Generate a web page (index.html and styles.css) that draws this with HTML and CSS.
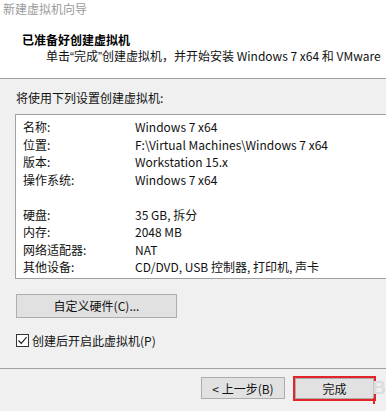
FILE: index.html
```html
<!DOCTYPE html>
<html lang="zh-CN">
<head>
    <meta charset="UTF-8">
    <meta name="viewport" content="width=device-width, initial-scale=1.0">
    <title>新建虚拟机向导</title>
    <link rel="stylesheet" href="styles.css">
</head>
<body>
    <div class="wizard">
        <header class="top">
            <div class="caption">新建虚拟机向导</div>
            <h1>已准备好创建虚拟机</h1>
            <p class="subtitle">单击<span class="q">“</span>完成<span class="q">”</span>创建虚拟机，并开始安装 Windows 7 x64 和 VMware</p>
        </header>

        <main class="content">
            <p class="intro">将使用下列设置创建虚拟机:</p>

            <div class="summary">
                <div class="row"><span class="key">名称:</span><span>Windows 7 x64</span></div>
                <div class="row"><span class="key">位置:</span><span>F:\Virtual Machines\Windows 7 x64</span></div>
                <div class="row"><span class="key">版本:</span><span>Workstation 15.x</span></div>
                <div class="row"><span class="key">操作系统:</span><span>Windows 7 x64</span></div>
                <div class="row"></div>
                <div class="row"><span class="key">硬盘:</span><span>35 GB, 拆分</span></div>
                <div class="row"><span class="key">内存:</span><span>2048 MB</span></div>
                <div class="row"><span class="key">网络适配器:</span><span>NAT</span></div>
                <div class="row"><span class="key">其他设备:</span><span>CD/DVD, USB 控制器, 打印机, 声卡</span></div>
            </div>

            <button class="btn btn-wide">自定义硬件(C)...</button>

            <label class="check">
                <span class="box">
                    <svg width="11" height="11" viewBox="0 0 11 11"><path d="M1.5 5.5 L4.3 8.3 L9.6 2.2" fill="none" stroke="#222" stroke-width="1.2"/></svg>
                </span>
                创建后开启此虚拟机(P)
            </label>
        </main>

        <footer class="actions">
            <button class="btn btn-nav">&lt; 上一步(B)</button>
            <button class="btn btn-nav btn-finish">完成</button>
            <span class="mark">B</span>
        </footer>
    </div>
</body>
</html>
```

FILE: styles.css
```css
body {
    margin: 0;
    font-family: "Noto Sans CJK SC", "Noto Sans", sans-serif;
    font-size: 12px;
    color: #111;
    background: #f0f0f0;
}
.wizard {
    position: relative;
    width: 386px;
    height: 411px;
    display: flex;
    flex-direction: column;
    overflow: hidden;
}
.top {
    height: 78px;
    background: #fff;
    border-bottom: 1px solid #a0a0a0;
}
.caption {
    padding-left: 3px;
    line-height: 18px;
    color: #9a9a9a;
}
.top h1 {
    margin: 14px 0 0;
    padding-left: 22px;
    font-size: 12px;
    font-weight: bold;
    line-height: 16px;
    color: #000;
}
.subtitle {
    margin: 0;
    padding-left: 46px;
    line-height: 16px;
    white-space: nowrap;
}
.q {
    font-family: "Liberation Sans", sans-serif;
}
.content {
    padding-left: 15px;
}
.intro {
    margin: 11px 0 8px 1px;
    line-height: 16px;
}
.summary {
    width: 400px;
    background: #fff;
    border: 1px solid #a0a0a0;
    padding: 3px 0 2px;
}
.row {
    display: flex;
    height: 17.5px;
    line-height: 17.5px;
    white-space: nowrap;
}
.key {
    width: 112px;
    padding-left: 7px;
    flex-shrink: 0;
}
.btn {
    font-family: inherit;
    font-size: 12px;
    color: #111;
    background: #e1e1e1;
    border: 1px solid #adadad;
    padding: 0;
    box-sizing: border-box;
}
.btn-wide {
    display: block;
    width: 161px;
    height: 24px;
    margin: 15px 0 0 1px;
}
.check {
    display: flex;
    align-items: center;
    gap: 3px;
    height: 14px;
    margin: 16px 0 0 1px;
}
.box {
    width: 13px;
    height: 13px;
    box-sizing: border-box;
    border: 1px solid #333;
    background: #fff;
    display: flex;
    align-items: center;
    justify-content: center;
}
.actions {
    margin-top: auto;
    height: 34px;
    border-top: 1px solid #a0a0a0;
    display: flex;
    justify-content: flex-end;
    align-items: flex-start;
    gap: 10px;
    padding: 8px 12px 0 0;
    box-sizing: content-box;
}
.btn-nav {
    width: 84px;
    height: 22px;
}
.btn-finish {
    position: relative;
    width: 79px;
    height: 21px;
    margin-top: 1px;
    outline: 2px solid #e3242b;
}
/* red mark runs on below the frame */
.btn-finish::after {
    content: "";
    position: absolute;
    right: -2px;
    top: 100%;
    width: 2px;
    height: 6px;
    background: #e3242b;
}
.mark {
    position: absolute;
    right: 0;
    bottom: 12px;
    font-family: "Liberation Sans", sans-serif;
    font-size: 19px;
    font-weight: bold;
    color: #dcdcdc;
}
```
